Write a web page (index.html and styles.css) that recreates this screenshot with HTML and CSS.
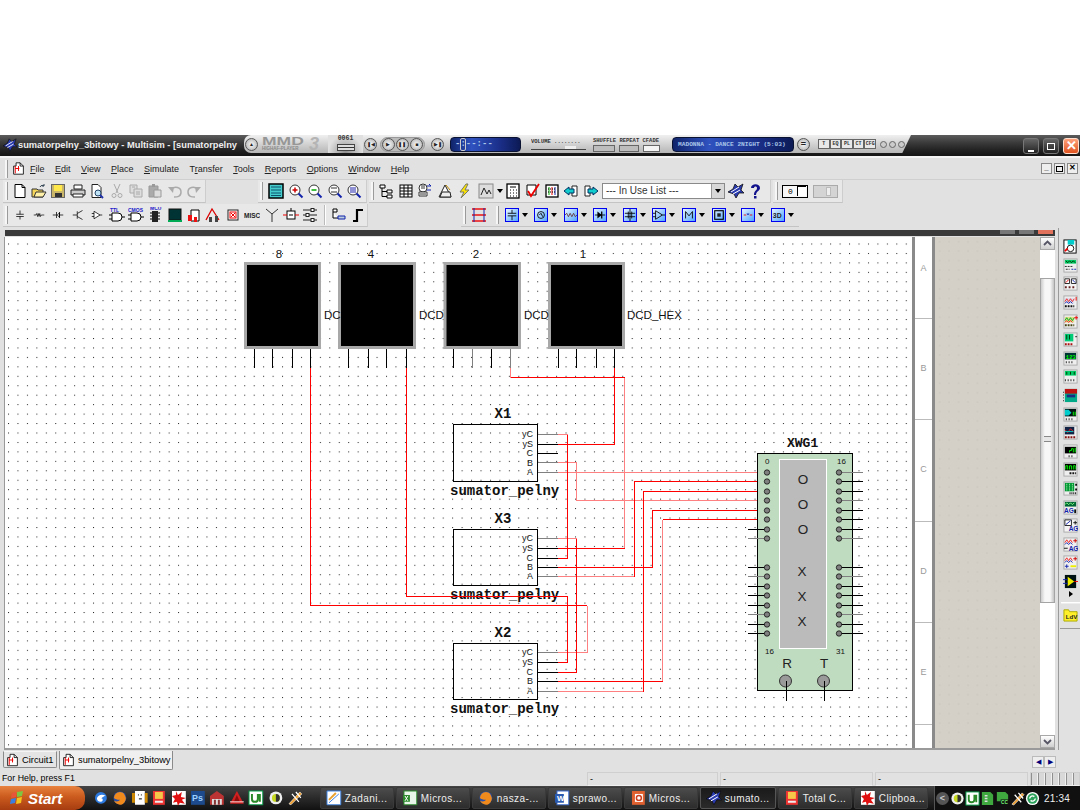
FILE: index.html
```html
<!DOCTYPE html>
<html lang="en">
<head>
<meta charset="utf-8">
<title>Multisim</title>
<link rel="stylesheet" href="styles.css">
</head>
<body>
<svg class="sprite" xmlns="http://www.w3.org/2000/svg">
  <symbol id="msim" viewBox="0 0 16 16"><path d="M0 9 5 6 7 1l3 3 5-3-2 6 3 3-5 0-3 5-2-4z" fill="#2a3bb0" stroke="#111" stroke-width=".8"/><path d="M3 9l8-5M5 11l7-4" stroke="#fff" stroke-width="1"/></symbol>
  <symbol id="cdoc" viewBox="0 0 16 16"><path d="M5 1h5l4 4v10H2V5h3z" fill="#fff" stroke="#000"/><path d="M10 1v4h4" fill="none" stroke="#000"/><path d="M4 5v9M4 8h5M8 5v6" fill="none" stroke="#e00" stroke-width="1.2"/></symbol>
  <symbol id="new" viewBox="0 0 16 16"><path d="M3 1.500h7l3 3v10H3z" fill="#fff" stroke="#000"/><path d="M10 1.500v3h3" fill="none" stroke="#000"/></symbol>
  <symbol id="open" viewBox="0 0 16 16"><path d="M1 6h5l1 1h5v7H1z" fill="#f5d65a" stroke="#333"/><path d="M3 14l2-5h10l-3 5z" fill="#fff2a8" stroke="#333"/><path d="M9 4c1-2 3-2 4-1m0 0v-2m0 2h-2" fill="none" stroke="#345"/></symbol>
  <symbol id="save" viewBox="0 0 16 16"><rect x="1.500" y="1.500" width="13" height="13" fill="#c9b66a" stroke="#666"/><rect x="4" y="2" width="8" height="6" fill="#ffe94a"/><rect x="5" y="10" width="7" height="4" fill="#333"/></symbol>
  <symbol id="print" viewBox="0 0 16 16"><path d="M4 2h8v4H4z" fill="#fff" stroke="#222"/><path d="M1 7h14v5H1z" fill="#ccc" stroke="#222"/><path d="M3 11h10v3H3z" fill="#fff" stroke="#222"/></symbol>
  <symbol id="prev" viewBox="0 0 16 16"><path d="M3 1.500h6l3 3v10H3z" fill="#fff" stroke="#222"/><circle cx="9" cy="10" r="3" fill="#bfe3f5" stroke="#246"/><path d="M11 12l3 3" stroke="#23a" stroke-width="2"/></symbol>
  <symbol id="cut" viewBox="0 0 16 16"><path d="M5 1l4 9M11 1 7 10" stroke="#aaa" fill="none"/><circle cx="5" cy="12.500" r="2" fill="none" stroke="#aaa"/><circle cx="11" cy="12.500" r="2" fill="none" stroke="#aaa"/></symbol>
  <symbol id="copy" viewBox="0 0 16 16"><path d="M2 2h7v8H2z" fill="#ddd" stroke="#aaa"/><path d="M6 6h8v8H6z" fill="#ddd" stroke="#aaa"/><path d="M8 9h4M8 11h4M4 4h3" stroke="#aaa"/></symbol>
  <symbol id="paste" viewBox="0 0 16 16"><path d="M2 3h9v11H2z" fill="#aaa" stroke="#999"/><path d="M7 7h7v7H7z" fill="#ddd" stroke="#999"/><path d="M5 1h3v3H5z" fill="#999"/></symbol>
  <symbol id="undo" viewBox="0 0 16 16"><path d="M4 6c4-3 10-2 10 3s-4 5-7 5" fill="none" stroke="#aaa" stroke-width="1.500"/><path d="M1 4h6l-1 6z" fill="#aaa"/></symbol>
  <symbol id="redo" viewBox="0 0 16 16"><path d="M12 6C8 3 2 4 2 9s4 5 7 5" fill="none" stroke="#aaa" stroke-width="1.500"/><path d="M15 4H9l1 6z" fill="#aaa"/></symbol>
  <symbol id="full" viewBox="0 0 16 16"><rect x="1" y="1" width="14" height="14" fill="#4cc" stroke="#000" stroke-width="1.500"/><path d="M3 4h10M3 7h10M3 10h10M3 12.500h10" stroke="#035" stroke-width=".8"/></symbol>
  <symbol id="zin" viewBox="0 0 16 16"><circle cx="7" cy="7" r="5" fill="#fff" stroke="#333"/><path d="M4.500 7h5M7 4.500v5" stroke="#c00" stroke-width="1.500"/><path d="M10.500 10.500l4 4" stroke="#12a" stroke-width="2"/></symbol>
  <symbol id="zout" viewBox="0 0 16 16"><circle cx="7" cy="7" r="5" fill="#fff" stroke="#333"/><path d="M4.500 7h5" stroke="#0a0" stroke-width="1.500"/><path d="M10.500 10.500l4 4" stroke="#12a" stroke-width="2"/></symbol>
  <symbol id="zarea" viewBox="0 0 16 16"><circle cx="7" cy="7" r="5" fill="#fff" stroke="#333"/><path d="M4 5h6M4 9h6" stroke="#333"/><path d="M10.500 10.500l4 4" stroke="#12a" stroke-width="2"/></symbol>
  <symbol id="zfit" viewBox="0 0 16 16"><circle cx="7" cy="7" r="5" fill="#fff" stroke="#333"/><path d="M5 4v6M7 4v6M9 4v6" stroke="#22a"/><path d="M10.500 10.500l4 4" stroke="#12a" stroke-width="2"/></symbol>
  <symbol id="hier" viewBox="0 0 16 16"><path d="M2 2h5v3H2zM9 7h5v3H9zM9 12h5v3H9z" fill="#fff" stroke="#000"/><path d="M4 5v8.500h5M4 8.500h5" fill="none" stroke="#000"/></symbol>
  <symbol id="grid" viewBox="0 0 16 16"><rect x="2" y="2" width="12" height="12" fill="#fff" stroke="#000"/><path d="M2 5h12M2 8h12M2 11h12M6 2v12M10 2v12" stroke="#000"/></symbol>
  <symbol id="db" viewBox="0 0 16 16"><circle cx="6" cy="5" r="4" fill="#fff" stroke="#333"/><path d="M2 9h8v4H2z" fill="#fff" stroke="#333"/><path d="M10 3h4M14 3l-2-2M10 7h4" stroke="#12a" fill="none"/><path d="M4 3h4M4 5h4M3 11h6" stroke="#333"/></symbol>
  <symbol id="pen" viewBox="0 0 16 16"><path d="M2 14 8 2l6 12z" fill="#fff" stroke="#222"/><path d="M5 9h8l1 5H3z" fill="#eee" stroke="#222"/><path d="M9 2l4 5" stroke="#b80"/></symbol>
  <symbol id="bolt" viewBox="0 0 16 16"><path d="M10 1 4 9h4l-3 6 8-8H9l3-6z" fill="#ffe600" stroke="#776"/></symbol>
  <symbol id="graph" viewBox="0 0 16 16"><rect x="1" y="1" width="14" height="14" fill="#ddd" stroke="#888"/><path d="M3 12 6 5l3 6 2-4 2 4" fill="none" stroke="#222"/></symbol>
  <symbol id="calc" viewBox="0 0 16 16"><rect x="2" y="1" width="12" height="14" fill="#fff" stroke="#000" stroke-width="1.300"/><path d="M5 4h6M5 7h1M8 7h1M11 7h1M5 10h1M8 10h1M11 10h1M5 13h1M8 13h1M11 13h1" stroke="#000"/></symbol>
  <symbol id="calc2" viewBox="0 0 16 16"><rect x="2" y="2" width="12" height="12" fill="#fff" stroke="#000" stroke-width="1.300"/><path d="M5 4v8" stroke="#0a0"/><path d="M8 4v8" stroke="#e00"/><path d="M11 4v8" stroke="#12a"/><path d="M4 6h8M4 9h8" stroke="#000" stroke-dasharray="1 1"/></symbol>
  <symbol id="check" viewBox="0 0 16 16"><path d="M2 2h9v10H2z" fill="#fff" stroke="#000"/><path d="M3 8l3 5 8-12" fill="none" stroke="#e00" stroke-width="1.800"/></symbol>
  <symbol id="back" viewBox="0 0 16 16"><path d="M9 3h5v10H9z" fill="#fff" stroke="#222"/><path d="M1 8l5-4v2h5v4H6v2z" fill="#1cc" stroke="#036"/></symbol>
  <symbol id="fwd" viewBox="0 0 16 16"><path d="M2 3h5v10H2z" fill="#fff" stroke="#222"/><path d="M15 8l-5-4v2H5v4h5v2z" fill="#1cc" stroke="#036"/></symbol>
  <symbol id="help" viewBox="0 0 16 16"><path d="M4 5c0-5 9-5 9 0 0 3-4 3-4 7H7c0-5 3-4 3-7 0-2-3-2-3 0z" fill="#12128c"/><rect x="7" y="13" width="2.500" height="2.500" fill="#12128c"/></symbol>
  <symbol id="s1" viewBox="0 0 16 16"><path d="M8 2v5M3 7h10M3 10h10M8 10v4" stroke="#000" fill="none"/></symbol>
  <symbol id="s2" viewBox="0 0 16 16"><path d="M1 8h3l1-2 1 4 1-4 1 4 1-4 1 4 1-2h4" stroke="#000" fill="none" stroke-width=".9"/></symbol>
  <symbol id="s3" viewBox="0 0 16 16"><path d="M1 8h5M10 8h5M6 4v8M10 4v8M7 8l3-3v6z" stroke="#000" fill="none"/></symbol>
  <symbol id="s4" viewBox="0 0 16 16"><path d="M1 8h6M7 3v10M7 6l7-4M7 10l7 4" stroke="#000" fill="none"/></symbol>
  <symbol id="s5" viewBox="0 0 16 16"><path d="M4 3v10l8-5zM1 6h3M1 10h3M12 8h3" stroke="#000" fill="#fff"/></symbol>
  <symbol id="s6" viewBox="0 0 16 16"><path d="M3 6h6a4 4 0 0 1 0 8H3zM13 10h3M0 8h3M0 12h3" stroke="#000" fill="#fff"/><text class="ttl-a" x="1" y="5">TTL</text></symbol>
  <symbol id="s7" viewBox="0 0 16 16"><path d="M3 6h6a4 4 0 0 1 0 8H3zM13 10h3M0 8h3M0 12h3" stroke="#000" fill="#fff"/><text class="ttl-a" x="0" y="5">CMOS</text></symbol>
  <symbol id="s8" viewBox="0 0 16 16"><rect x="5" y="4" width="6" height="11" fill="#222"/><path d="M3 6h2M3 9h2M3 12h2M11 6h2M11 9h2M11 12h2" stroke="#000"/><text class="ttl-a" x="3" y="3">MCU</text></symbol>
  <symbol id="s9" viewBox="0 0 16 16"><rect x="2" y="2" width="12" height="11" fill="#033" stroke="#111"/><path d="M1 14h14" stroke="#0a5" stroke-width="2"/></symbol>
  <symbol id="s10" viewBox="0 0 16 16"><path d="M5 3h8v11H5z" fill="#fff" stroke="#000"/><path d="M2 8h4v6H2zM8 10h3v5H8z" fill="#e11"/></symbol>
  <symbol id="s11" viewBox="0 0 16 16"><path d="M1 13 7 2l7 11" fill="none" stroke="#d00" stroke-width="1.300"/><path d="M4 10h3v5H4zM10 9h3v6h-3z" fill="#444"/></symbol>
  <symbol id="s12" viewBox="0 0 16 16"><rect x="3" y="3" width="10" height="10" fill="#fff" stroke="#222"/><rect x="5" y="5" width="6" height="6" fill="none" stroke="#e00"/><path d="M6 6l4 4M10 6l-4 4" stroke="#e00"/></symbol>
  <symbol id="s13" viewBox="0 0 16 16"><text class="misc" x="0" y="11">MISC</text></symbol>
  <symbol id="s14" viewBox="0 0 16 16"><path d="M2 2l6 5 6-5M8 7v8" stroke="#333" fill="none"/></symbol>
  <symbol id="s15" viewBox="0 0 16 16"><rect x="4" y="4" width="8" height="8" fill="#fff" stroke="#000"/><path d="M0 8h4M12 8h4" stroke="#e00"/><path d="M8 1v3" stroke="#000"/><path d="M6 8h4" stroke="#000"/></symbol>
  <symbol id="s16" viewBox="0 0 16 16"><path d="M1 3h14M1 8h14M1 13h14" stroke="#222"/><rect x="9" y="1.500" width="3" height="3" fill="#fff" stroke="#222"/><rect x="4" y="6.500" width="3" height="3" fill="#fff" stroke="#222"/><rect x="9" y="11.500" width="3" height="3" fill="#fff" stroke="#222"/></symbol>
  <symbol id="s17" viewBox="0 0 16 16"><path d="M2 2h4v3H2zM2 5v6h5" fill="#fff" stroke="#000"/><path d="M7 9h7v3H7z" fill="#bcd" stroke="#12a"/></symbol>
  <symbol id="s18" viewBox="0 0 16 16"><path d="M3 14h4V3h6" fill="none" stroke="#000" stroke-width="2.200"/></symbol>
  <symbol id="bus" viewBox="0 0 16 16"><path d="M1 2h14M1 8h14M1 14h14" stroke="#e11" stroke-width="1.300"/><path d="M3 1v14M13 1v14" stroke="#12a"/></symbol>
  <symbol id="b1" viewBox="0 0 14 14"><path d="M7 1v4M2 5h10M2 8h10M7 8v5" stroke="#000" fill="none"/></symbol>
  <symbol id="b2" viewBox="0 0 14 14"><circle cx="7" cy="7" r="4" fill="none" stroke="#000"/><path d="M5 7l2-2 2 4" fill="none" stroke="#000"/></symbol>
  <symbol id="b3" viewBox="0 0 14 14"><path d="M0 7l2-2 2 4 2-4 2 4 2-4 2 4 2-2" fill="none" stroke="#633"/></symbol>
  <symbol id="b4" viewBox="0 0 14 14"><path d="M1 7h12" stroke="#000" fill="none"/><path d="M4 3v8l5-4z" fill="#000"/><path d="M9 3v8" stroke="#000" stroke-width="1.500"/></symbol>
  <symbol id="b5" viewBox="0 0 14 14"><path d="M7 0v14M1 5h12M1 9h12M5 3v8M9 3v8" stroke="#000" fill="none"/></symbol>
  <symbol id="b6" viewBox="0 0 14 14"><path d="M3 2v10l8-5zM0 5h3M0 9h3M11 7h3" stroke="#000" fill="none"/></symbol>
  <symbol id="b7" viewBox="0 0 14 14"><path d="M3 11V3l4 5 4-5v8" stroke="#000" fill="none"/></symbol>
  <symbol id="b8" viewBox="0 0 14 14"><rect x="2" y="2" width="10" height="10" fill="none" stroke="#000" stroke-width="1.300"/><rect x="5" y="5" width="4" height="4" fill="#222"/></symbol>
  <symbol id="b9" viewBox="0 0 14 14"><path d="M2 7h3M9 7h3" stroke="#e00"/><path d="M6 5l1 2 1-2" stroke="#12a" fill="none"/></symbol>
  <symbol id="b10" viewBox="0 0 14 14"><text class="b3d" x="1" y="10">3D</text></symbol>
  <symbol id="r0" viewBox="0 0 16 16"><rect x="1" y="1" width="13" height="14" fill="#fff" stroke="#000"/><rect x="5" y="1" width="7" height="5" fill="#0cc"/><circle cx="8" cy="10" r="3.500" fill="none" stroke="#111"/><path d="M2 13l3-3" stroke="#e00" stroke-width="2"/></symbol>
  <symbol id="r1" viewBox="0 0 16 16"><rect x="1" y="1" width="14" height="14" fill="#eee" stroke="#aaa"/><path d="M2 2h12v4H2z" fill="#0c6"/><path d="M3 3l2 2 2-2 2 2 2-2 2 2" stroke="#030" fill="none"/><path d="M2 9h8M3 12h4" stroke="#222" stroke-dasharray="2 1"/><path d="M9 12h5" stroke="#12a" stroke-dasharray="2 1"/></symbol>
  <symbol id="r2" viewBox="0 0 16 16"><rect x="1" y="1" width="14" height="14" fill="#f4f4f4" stroke="#aaa"/><path d="M2 3h5v5H2zM9 3h5v5H9z" fill="#fff" stroke="#222"/><path d="M3 7l3-3" stroke="#e00"/><path d="M10 4l3 3" stroke="#12a"/><path d="M2 12h10" stroke="#622" stroke-dasharray="2 2" stroke-width="2"/></symbol>
  <symbol id="r3" viewBox="0 0 16 16"><rect x="1" y="1" width="14" height="14" fill="#f0f0f0" stroke="#aaa"/><path d="M2 3h10v6H2z" fill="#dde"/><path d="M2 7l2-3 2 3 2-3 2 3 2-3" stroke="#e22" fill="none"/><path d="M2 9l2-2 2 2 2-2 2 2" stroke="#12a" fill="none"/><path d="M14 2v4" stroke="#e00"/><path d="M2 12h10" stroke="#111" stroke-dasharray="2 1" stroke-width="2"/></symbol>
  <symbol id="r4" viewBox="0 0 16 16"><rect x="1" y="1" width="14" height="14" fill="#f0f0f0" stroke="#aaa"/><path d="M2 3h10v6H2z" fill="#dd8"/><path d="M2 7l2-3 2 3 2-3 2 3 2-3" stroke="#0a2" fill="none"/><path d="M2 9l2-2 2 2 2-2 2 2" stroke="#e22" fill="none"/><path d="M14 2v4M12 4h4" stroke="#e00"/><path d="M2 12h10" stroke="#441" stroke-dasharray="2 1" stroke-width="2"/></symbol>
  <symbol id="r5" viewBox="0 0 16 16"><rect x="1" y="1" width="14" height="14" fill="#eee" stroke="#aaa"/><rect x="2" y="2" width="9" height="8" fill="#0c7"/><path d="M4 3v5M7 3v5" stroke="#030"/><path d="M2 13h9" stroke="#a11" stroke-dasharray="2 1" stroke-width="2"/><path d="M13 5h2" stroke="#222"/></symbol>
  <symbol id="r6" viewBox="0 0 16 16"><rect x="1" y="1" width="14" height="14" fill="#eee" stroke="#aaa"/><rect x="2" y="2" width="12" height="7" fill="#033"/><text class="rt" x="3" y="8">123</text><path d="M3 12h1M6 12h1M9 12h1" stroke="#222" stroke-width="2"/></symbol>
  <symbol id="r7" viewBox="0 0 16 16"><rect x="1" y="1" width="14" height="14" fill="#eee" stroke="#aaa"/><rect x="2" y="2" width="12" height="5" fill="#0c6"/><path d="M4 3v3M8 3v3M12 3v3" stroke="#030"/><path d="M2 12h12" stroke="#222" stroke-dasharray="1 2" stroke-width="2"/></symbol>
  <symbol id="r8" viewBox="0 0 16 16"><rect x="2" y="1" width="13" height="14" fill="#0a8"/><rect x="2" y="1" width="13" height="5" fill="#b11"/><rect x="4" y="7" width="9" height="3" fill="#1a2a80"/><path d="M0 4v10" stroke="#222" stroke-dasharray="1 2" stroke-width="2"/></symbol>
  <symbol id="r9" viewBox="0 0 16 16"><rect x="1" y="1" width="14" height="14" fill="#eee" stroke="#aaa"/><rect x="2" y="2" width="12" height="8" fill="#011"/><path d="M2 3h4l3 3-3 3H2z" fill="#0cc"/><path d="M11 5v4M13 5v4" stroke="#0f0"/><path d="M3 13h8" stroke="#222" stroke-dasharray="1 2" stroke-width="2"/></symbol>
  <symbol id="r10" viewBox="0 0 16 16"><rect x="1" y="1" width="14" height="14" fill="#eee" stroke="#aaa"/><rect x="2" y="2" width="10" height="8" fill="#124"/><path d="M2 5l3 3 3-4 3 3" stroke="#e22" fill="none"/><path d="M2 7h9" stroke="#1cc"/><path d="M2 13h12" stroke="#811" stroke-dasharray="2 1" stroke-width="2"/></symbol>
  <symbol id="r11" viewBox="0 0 16 16"><rect x="1" y="1" width="14" height="14" fill="#eee" stroke="#aaa"/><rect x="2" y="3" width="12" height="7" fill="#000"/><path d="M7 9V7h2V5h2v4M13 4v5" stroke="#0f0" fill="none"/><path d="M6 13h6" stroke="#222" stroke-dasharray="1 2" stroke-width="2"/></symbol>
  <symbol id="r12" viewBox="0 0 16 16"><rect x="1" y="1" width="14" height="14" fill="#eee" stroke="#aaa"/><rect x="2" y="2" width="12" height="7" fill="#000"/><path d="M3 8V4h2v4M7 8V4h2v4M11 8V4h2v4" stroke="#0f0" fill="none"/><path d="M7 12h7" stroke="#111" stroke-dasharray="2 1" stroke-width="2"/></symbol>
  <symbol id="r13" viewBox="0 0 16 16"><rect x="1" y="1" width="14" height="14" fill="#eee" stroke="#aaa"/><rect x="2" y="2" width="10" height="9" fill="#093"/><path d="M4 3v7M7 3v7M10 3v7" stroke="#cfc" stroke-dasharray="1 1"/><path d="M14 3v2M14 8v2" stroke="#111" stroke-width="2"/><path d="M7 13h7" stroke="#111" stroke-dasharray="1 1" stroke-width="2"/></symbol>
  <symbol id="r14" viewBox="0 0 16 16"><rect x="1" y="1" width="14" height="14" fill="#eee" stroke="#aaa"/><rect x="2" y="2" width="12" height="5" fill="#063"/><path d="M2 5l2-2 2 2 2-2 2 2 2-2" stroke="#8f8" fill="none"/><text class="ag" x="1" y="14">AG</text><path d="M13 10v4" stroke="#111" stroke-width="2"/></symbol>
  <symbol id="r15" viewBox="0 0 16 16"><rect x="1" y="1" width="14" height="14" fill="#f4f4f4" stroke="#aaa"/><path d="M2 2h7v6H2z" fill="#fff" stroke="#222"/><path d="M3 7l5-4" stroke="#12a"/><path d="M11 5h4M13 3v4" stroke="#111"/><text class="ag" x="6" y="14">AG</text></symbol>
  <symbol id="r16" viewBox="0 0 16 16"><rect x="1" y="1" width="14" height="14" fill="#f0f0f0" stroke="#aaa"/><path d="M2 6l2-3 2 3 2-3 2 3" stroke="#e22" fill="none"/><path d="M2 8l2-2 2 2 2-2 2 2" stroke="#12a" fill="none"/><path d="M13 2v4M11 4h4" stroke="#c00"/><text class="ag" x="6" y="15">AG</text><path d="M1 12h4" stroke="#111"/></symbol>
  <symbol id="r17" viewBox="0 0 16 16"><rect x="1" y="1" width="14" height="14" fill="#f0f0f0" stroke="#aaa"/><path d="M2 6l2-3 2 3 2-3 2 3" stroke="#e22" fill="none"/><path d="M2 8l2-2 2 2 2-2 2 2" stroke="#12a" fill="none"/><path d="M13 2v4M11 4h4" stroke="#c00"/><path d="M8 12h6" stroke="#ee0" stroke-width="2"/><path d="M2 12h4M4 10v4" stroke="#12a"/></symbol>
  <symbol id="r18" viewBox="0 0 16 16"><rect x="2" y="1" width="12" height="14" fill="#011"/><path d="M5 3v10l7-5z" fill="#ee0"/><path d="M0 6h5M0 10h5" stroke="#12a"/><path d="M12 8h4" stroke="#e00"/></symbol>
  <symbol id="r19" viewBox="0 0 16 16"><path d="M1 3h5l1 2h8v10H1z" fill="#fff02a" stroke="#aa0"/><text class="ldv" x="3" y="13">LdV</text></symbol>
  <symbol id="chev-up" viewBox="0 0 13 11"><path d="M3 7l3.500-3.500L10 7" fill="none" stroke="#556" stroke-width="1.800"/></symbol>
  <symbol id="chev-down" viewBox="0 0 13 11"><path d="M3 4l3.500 3.500L10 4" fill="none" stroke="#556" stroke-width="1.800"/></symbol>
  <symbol id="winflag" viewBox="0 0 16 16"><path d="M3 3 7 2v5l-5 1z" fill="#e8563a"/><path d="M8 2l6-1-1 5-5 1z" fill="#7ec540"/><path d="M2 9l5-1-1 5-5 1z" fill="#3a7fe0"/><path d="M8 8l5-1-1 6-5 1z" fill="#f5c21b"/></symbol>
  <symbol id="q1" viewBox="0 0 16 16"><circle cx="8" cy="8" r="6" fill="#2d7be0"/><path d="M4 8c2-4 6-4 9-2-3 0-3 2-5 2 2 0 3 3 0 4-3 0-4-2-4-4z" fill="#fff"/></symbol>
  <symbol id="q2" viewBox="0 0 16 16"><circle cx="8" cy="8" r="6.500" fill="#2a4fa8"/><path d="M2 8a6 6 0 0 1 6-6c4 0 5 3 6 6 0 4-3 7-6 7-2 0-5-2-6-4 2 1 5 1 6-1-3 0-5-1-6-2z" fill="#f08a1d"/></symbol>
  <symbol id="q3" viewBox="0 0 16 16"><path d="M3 1h10v14H3z" fill="#fff"/><path d="M0 3h3v10H0zM13 3h3v10h-3z" fill="#c80"/><path d="M6 5h1M9 5h1M7 9h3" stroke="#000"/></symbol>
  <symbol id="q4" viewBox="0 0 16 16"><rect x="2" y="1" width="12" height="14" fill="#e33"/><rect x="4" y="2" width="8" height="7" fill="#f5c84a"/><path d="M4 12h8" stroke="#eee" stroke-width="2"/></symbol>
  <symbol id="q5" viewBox="0 0 16 16"><rect x="1" y="1" width="14" height="14" fill="#fff"/><path d="M5 1l2 4 4-3-1 5 5 1-4 2 3 4-5-1-2 3-1-4-4 1 2-4-3-3 4-1z" fill="#e01010"/></symbol>
  <symbol id="q6" viewBox="0 0 16 16"><rect x="1" y="1" width="14" height="14" fill="#1c4a8c"/><text class="ps" x="2" y="11">Ps</text></symbol>
  <symbol id="q7" viewBox="0 0 16 16"><path d="M1 6 8 1l7 5v9H1z" fill="#b33"/><path d="M3 9h10v6H3z" fill="#ddd"/><path d="M5 10h2v5H5zM9 10h2v5H9z" fill="#833"/></symbol>
  <symbol id="q8" viewBox="0 0 16 16"><path d="M8 1l7 13H1z" fill="#d02020"/><path d="M8 5l3 7H5z" fill="#8a0d0d"/><path d="M1 12h14" stroke="#fdd"/></symbol>
  <symbol id="q9" viewBox="0 0 16 16"><rect x="1" y="1" width="14" height="14" fill="#fff" stroke="#094"/><path d="M4 4v5a3 3 0 0 0 6 0V4M12 4v8" stroke="#2a8a2a" stroke-width="2" fill="none"/></symbol>
  <symbol id="q10" viewBox="0 0 16 16"><circle cx="8" cy="8" r="6.500" fill="#eee"/><circle cx="8" cy="8" r="4" fill="#c6d820"/><path d="M8 4a4 4 0 0 1 0 8z" fill="#333"/></symbol>
  <symbol id="q11" viewBox="0 0 16 16"><path d="M2 14 13 2l2 2L4 15z" fill="#f0a030" stroke="#fff" stroke-width=".6"/><path d="M5 4l7 8M9 2l5 6" stroke="#fff" stroke-width="1.300"/></symbol>
  <symbol id="t1" viewBox="0 0 16 16"><rect x="1" y="1" width="14" height="14" fill="#fff"/><path d="M3 13 13 4M1 1h14v14H1z" stroke="#3a7fe0" fill="none"/><path d="M3 10 10 3" stroke="#e8a030" stroke-width="2"/></symbol>
  <symbol id="t2" viewBox="0 0 16 16"><rect x="2" y="1" width="13" height="14" fill="#e8f5e8" stroke="#2a8a2a"/><path d="M1 5h7v7H1z" fill="#2a8a2a"/><path d="M3 6l3 5M6 6l-3 5" stroke="#fff"/></symbol>
  <symbol id="t3" viewBox="0 0 16 16"><rect x="3" y="1" width="12" height="14" fill="#fff" stroke="#36c"/><path d="M1 4h9v9H1z" fill="#2a5ab0"/><text class="w" x="3" y="11">W</text></symbol>
  <symbol id="t4" viewBox="0 0 16 16"><rect x="2" y="1" width="13" height="14" fill="#e06030"/><rect x="5" y="4" width="8" height="8" fill="#fff"/><circle cx="9" cy="8" r="2.500" fill="none" stroke="#d04020" stroke-width="1.500"/></symbol>
  <symbol id="tr1" viewBox="0 0 16 16"><path d="M2 1h9l3 3v11H2z" fill="#3fa83f"/><path d="M5 5h3M5 8h3M5 11h3" stroke="#ddd" stroke-width="1.500"/></symbol>
  <symbol id="tr2" viewBox="0 0 16 16"><path d="M2 1h9l3 3v7H2z" fill="#3fa83f"/><rect x="6" y="9" width="9" height="6" fill="#111"/><text class="cc" x="6.500" y="14">CC</text></symbol>
  <symbol id="tr3" viewBox="0 0 16 16"><circle cx="8" cy="8" r="7" fill="#fff"/><circle cx="8" cy="8" r="5.500" fill="#2aa05a"/><path d="M5 8a3 3 0 0 1 5-2m1 2a3 3 0 0 1-5 2" stroke="#fff" stroke-width="1.500" fill="none"/></symbol>
</svg>

<div class="page">
  <div class="blank"></div>

  <header class="titlebar">
    <svg class="title-icon"><use href="#msim"/></svg>
    <span class="title-text">sumatorpelny_3bitowy - Multisim - [sumatorpelny</span>
    <div class="player">
      <span class="orb eject">&#9650;</span>
      <div class="logo">
        <div class="logo-main"><span class="logo-big">MMD</span><span class="logo-sub">HIGHAF-PLAYER</span></div>
        <span class="logo-three">3</span>
      </div>
      <div class="counter"><span>0061</span><i class="counter-btn"></i></div>
      <span class="orb prev">&#10074;&#9664;</span>
      <div class="pill"><span class="orb">&#9654;</span><span class="orb">&#10074;&#10074;</span><span class="orb">&#9632;</span></div>
      <span class="orb next">&#9654;&#10074;</span>
      <div class="lcd lcd-time"><span>-:--:--</span><i class="knob"></i></div>
      <div class="volume"><span>VOLUME ........</span><i class="slider"></i></div>
      <div class="modes">
        <span class="modes-text">SHUFFLE REPEAT CFADE</span>
        <div class="modes-btns"><i class="mb1"></i><i class="mb2"></i><i class="mb3"></i></div>
      </div>
      <div class="lcd lcd-song"><span>MADONNA - DANCE 2NIGHT (5:03)</span></div>
      <span class="orb menu-orb">=</span>
      <div class="minis"><span>T</span><span>EQ</span><span>PL</span><span>CT</span><span>CFG</span></div>
      <div class="dots"><i></i><i></i><i></i></div>
    </div>
    <div class="win-btns">
      <button class="wb wb-min"><span class="g-min"></span></button>
      <button class="wb wb-max"><span class="g-max"></span></button>
      <button class="wb wb-close">&#10005;</button>
    </div>
  </header>

  <nav class="menubar">
    <i class="grip"></i>
    <svg class="menu-icon"><use href="#cdoc"/></svg>
    <ul class="menu">
      <li><u>F</u>ile</li><li><u>E</u>dit</li><li><u>V</u>iew</li><li><u>P</u>lace</li><li><u>S</u>imulate</li><li>T<u>r</u>ansfer</li><li><u>T</u>ools</li><li><u>R</u>eports</li><li><u>O</u>ptions</li><li><u>W</u>indow</li><li><u>H</u>elp</li>
    </ul>
    <div class="mdi">
      <span class="mdi-b">_</span>
      <span class="mdi-b"><span class="g-rest"></span></span>
      <span class="mdi-b">&#10005;</span>
    </div>
  </nav>

  <div class="toolbar">
    <div class="grp t1g1"><i class="grip"></i>
      <svg class="ic"><use href="#new"/></svg><svg class="ic"><use href="#open"/></svg><svg class="ic"><use href="#save"/></svg><svg class="ic"><use href="#print"/></svg><svg class="ic"><use href="#prev"/></svg><svg class="ic"><use href="#cut"/></svg><svg class="ic"><use href="#copy"/></svg><svg class="ic"><use href="#paste"/></svg><svg class="ic"><use href="#undo"/></svg><svg class="ic"><use href="#redo"/></svg>
    </div>
    <div class="grp t1g2"><i class="grip"></i>
      <svg class="ic"><use href="#full"/></svg><svg class="ic"><use href="#zin"/></svg><svg class="ic"><use href="#zout"/></svg><svg class="ic"><use href="#zarea"/></svg><svg class="ic"><use href="#zfit"/></svg>
    </div>
    <div class="grp t1g3"><i class="grip"></i>
      <svg class="ic"><use href="#hier"/></svg><svg class="ic"><use href="#grid"/></svg><svg class="ic"><use href="#db"/></svg><svg class="ic"><use href="#pen"/></svg><svg class="ic"><use href="#bolt"/></svg><svg class="ic ic-graph"><use href="#graph"/></svg><i class="drop"></i><svg class="ic"><use href="#calc"/></svg><svg class="ic"><use href="#check"/></svg><svg class="ic"><use href="#calc2"/></svg><svg class="ic"><use href="#back"/></svg><svg class="ic"><use href="#fwd"/></svg>
      <div class="combo"><span>--- In Use List ---</span><i class="combo-btn"></i></div>
      <svg class="ic"><use href="#msim"/></svg><svg class="ic"><use href="#help"/></svg>
    </div>
    <div class="grp t1g4"><i class="grip"></i>
      <div class="sw sw-on"><span>0</span><i></i></div>
      <div class="sw sw-off"><i></i></div>
    </div>
  </div>

  <div class="toolbar">
    <div class="grp t2g1"><i class="grip"></i>
      <svg class="ic ic-sm"><use href="#s1"/></svg><svg class="ic ic-sm"><use href="#s2"/></svg><svg class="ic ic-sm"><use href="#s3"/></svg><svg class="ic ic-sm"><use href="#s4"/></svg><svg class="ic ic-sm"><use href="#s5"/></svg><svg class="ic"><use href="#s6"/></svg><svg class="ic"><use href="#s7"/></svg><svg class="ic"><use href="#s8"/></svg><svg class="ic"><use href="#s9"/></svg><svg class="ic"><use href="#s10"/></svg><svg class="ic"><use href="#s11"/></svg><svg class="ic"><use href="#s12"/></svg><svg class="ic"><use href="#s13"/></svg><svg class="ic"><use href="#s14"/></svg><svg class="ic"><use href="#s15"/></svg><svg class="ic"><use href="#s16"/></svg>
      <i class="vsep"></i>
      <svg class="ic"><use href="#s17"/></svg><svg class="ic"><use href="#s18"/></svg>
    </div>
    <div class="grp t2g2"><i class="grip"></i><svg class="ic"><use href="#bus"/></svg></div>
    <div class="grp t2g3"><i class="grip"></i>
      <div class="bcell"><svg class="bi"><use href="#b1"/></svg><i class="drop"></i></div>
      <div class="bcell"><svg class="bi"><use href="#b2"/></svg><i class="drop"></i></div>
      <div class="bcell"><svg class="bi"><use href="#b3"/></svg><i class="drop"></i></div>
      <div class="bcell"><svg class="bi"><use href="#b4"/></svg><i class="drop"></i></div>
      <div class="bcell"><svg class="bi"><use href="#b5"/></svg><i class="drop"></i></div>
      <div class="bcell"><svg class="bi"><use href="#b6"/></svg><i class="drop"></i></div>
      <div class="bcell"><svg class="bi"><use href="#b7"/></svg><i class="drop"></i></div>
      <div class="bcell"><svg class="bi"><use href="#b8"/></svg><i class="drop"></i></div>
      <div class="bcell"><svg class="bi"><use href="#b9"/></svg><i class="drop"></i></div>
      <div class="bcell"><svg class="bi"><use href="#b10"/></svg><i class="drop"></i></div>
    </div>
  </div>

  <main class="workspace">
    <div class="doc">
      <div class="doc-strip"><i></i><i></i><i class="red"></i></div>
      <div class="doc-body">
        <svg class="sheet" width="907" height="511" viewBox="5 237 907 511" xmlns="http://www.w3.org/2000/svg">
          <defs>
            <pattern id="dots" patternUnits="userSpaceOnUse" x="8" y="243.500" width="9.450" height="9.450"><rect width="1" height="1" fill="#222"/></pattern>
          </defs>
          <rect x="5" y="237" width="907" height="511" fill="#fff"/>
          <rect x="5" y="237" width="907" height="511" fill="url(#dots)"/>

          <g class="lcdbox">
            <rect x="245.500" y="263.500" width="74" height="84"/>
            <rect x="339.500" y="263.500" width="75" height="84"/>
            <rect x="445" y="263.500" width="74.500" height="84"/>
            <rect x="549.500" y="263.500" width="74" height="84"/>
          </g>
          <g class="t-lbl">
            <text x="279" y="258" text-anchor="middle">8</text>
            <text x="371" y="258" text-anchor="middle">4</text>
            <text x="476" y="258" text-anchor="middle">2</text>
            <text x="583" y="258" text-anchor="middle">1</text>
            <text x="324" y="319">DC</text>
            <text x="419" y="319">DCD</text>
            <text x="524" y="319">DCD</text>
            <text x="627" y="319">DCD_HEX</text>
          </g>

          <g class="comp">
            <rect x="453.500" y="424.500" width="84" height="57"/>
            <rect x="453.500" y="529.500" width="84" height="56"/>
            <rect x="453.500" y="643.500" width="84" height="56"/>
          </g>
          <g class="t-name">
            <text x="503" y="418" text-anchor="middle">X1</text>
            <text x="450" y="495">sumator_pelny</text>
            <text x="503" y="523" text-anchor="middle">X3</text>
            <text x="450" y="599">sumator_pelny</text>
            <text x="503" y="637" text-anchor="middle">X2</text>
            <text x="450" y="713">sumator_pelny</text>
            <text class="t-tight" x="787" y="447">XWG1</text>
          </g>
          <g class="t-pin">
            <text x="533" y="437">yC</text><text x="533" y="447">yS</text><text x="533" y="456">C</text><text x="533" y="466">B</text><text x="533" y="475">A</text>
            <text x="533" y="541">yC</text><text x="533" y="551">yS</text><text x="533" y="561">C</text><text x="533" y="570">B</text><text x="533" y="579">A</text>
            <text x="533" y="655">yC</text><text x="533" y="665">yS</text><text x="533" y="675">C</text><text x="533" y="684">B</text><text x="533" y="694">A</text>
          </g>

          <path class="w-black" d="M254.500 349v19M272.500 349v19M292.500 349v19M310.500 349v19M348.500 349v19M368.500 349v19M386.500 349v19M406.500 349v19M453.500 349v19M491.500 349v19M558.500 349v19M576.500 349v19M596.500 349v19M614.500 349v19"/>
          <path class="w-gray" d="M472.500 349v19M510.500 349v19"/>
          <path class="w-gray" d="M538 434.500h20M538 462.500h20M538 472.500h20M538 538.500h20M538 576.500h20M538 652.500h20M538 691.500h20"/>
          <path class="w-black" d="M538 444.500h20M538 453.500h20M538 548.500h20M538 558.500h20M538 567.500h20M538 662.500h20M538 672.500h20M538 681.500h20"/>

          <path class="w-pink" d="M510.500 368v9.500M624.500 377.500V548.500M558 434.500h9.500M558 462.500h18.500V500.500H764M558 472.500H764M558 538.500h18.500M558 576.500h76.500M587 605.500V652.500H558M662.500 519.500V681.500M643.500 691.500H558"/>
          <path class="w-red" d="M310.500 368V605.500H587M406.500 368V596.500H567.500V662.500H558M558 444.500H614.500V368M510.500 377.500H624.500M624.500 548.500H558M567.500 434.500V558.500H558M576.500 538.500V672.500H558M558 567.500H652.500V510.500H764M634.500 576.500V481.500H764M558 681.500H662.500M662.500 519.500H764M643.500 691.500V491.500H764"/>

          <rect class="inst" x="757.500" y="453.500" width="95" height="237"/>
          <rect class="inst-in" x="779.500" y="459.500" width="47" height="189"/>
          <path class="w-black" d="M748 529.500h19M748 567.500h19M748 586.500h19M748 595.500h19M748 605.500h19M748 624.500h19M748 633.500h19M839 481.500h24M839 491.500h24M839 510.500h24M839 519.500h24M839 529.500h24M839 567.500h24M839 586.500h24M839 595.500h24M839 605.500h24M839 624.500h24M839 633.500h24"/>
          <path class="w-gray" d="M748 538.500h19M748 576.500h19M748 614.500h19M839 472.500h24M839 500.500h24M839 538.500h24M839 576.500h24M839 614.500h24"/>
          <g class="ipin">
            <circle cx="767" cy="472.500" r="2.500"/><circle cx="767" cy="481.500" r="2.500"/><circle cx="767" cy="491.500" r="2.500"/><circle cx="767" cy="500.500" r="2.500"/><circle cx="767" cy="510.500" r="2.500"/><circle cx="767" cy="519.500" r="2.500"/><circle cx="767" cy="529.500" r="2.500"/><circle cx="767" cy="538.500" r="2.500"/>
            <circle cx="767" cy="567.500" r="2.500"/><circle cx="767" cy="576.500" r="2.500"/><circle cx="767" cy="586.500" r="2.500"/><circle cx="767" cy="595.500" r="2.500"/><circle cx="767" cy="605.500" r="2.500"/><circle cx="767" cy="614.500" r="2.500"/><circle cx="767" cy="624.500" r="2.500"/><circle cx="767" cy="633.500" r="2.500"/>
            <circle cx="839" cy="472.500" r="2.500"/><circle cx="839" cy="481.500" r="2.500"/><circle cx="839" cy="491.500" r="2.500"/><circle cx="839" cy="500.500" r="2.500"/><circle cx="839" cy="510.500" r="2.500"/><circle cx="839" cy="519.500" r="2.500"/><circle cx="839" cy="529.500" r="2.500"/><circle cx="839" cy="538.500" r="2.500"/>
            <circle cx="839" cy="567.500" r="2.500"/><circle cx="839" cy="576.500" r="2.500"/><circle cx="839" cy="586.500" r="2.500"/><circle cx="839" cy="595.500" r="2.500"/><circle cx="839" cy="605.500" r="2.500"/><circle cx="839" cy="614.500" r="2.500"/><circle cx="839" cy="624.500" r="2.500"/><circle cx="839" cy="633.500" r="2.500"/>
          </g>
          <g class="ipin-big"><circle cx="785.500" cy="681" r="6"/><circle cx="823.500" cy="681" r="6"/></g>
          <path class="w-black" d="M786.500 681v20M824.500 681v20"/>
          <g class="t-tiny">
            <text x="765" y="464">0</text><text x="837" y="464">16</text><text x="765" y="654">16</text><text x="836" y="654">31</text>
          </g>
          <g class="t-mark">
            <text x="803" y="484" text-anchor="middle">O</text><text x="803" y="509" text-anchor="middle">O</text><text x="803" y="534" text-anchor="middle">O</text>
            <text x="802" y="576" text-anchor="middle">X</text><text x="802" y="601" text-anchor="middle">X</text><text x="802" y="626" text-anchor="middle">X</text>
            <text x="787" y="668" text-anchor="middle">R</text><text x="824" y="668" text-anchor="middle">T</text>
          </g>
        </svg>
        <div class="ruler">
          <span>A</span><span>B</span><span>C</span><span>D</span><span>E</span>
        </div>
        <div class="outside"></div>
        <div class="vscroll">
          <span class="sb-btn"><svg class="sb-ic"><use href="#chev-up"/></svg></span>
          <div class="sb-track"><div class="sb-thumb"><i></i></div></div>
          <span class="sb-btn"><svg class="sb-ic"><use href="#chev-down"/></svg></span>
        </div>
      </div>
    </div>
    <aside class="instbar">
      <svg class="ri"><use href="#r0"/></svg><svg class="ri"><use href="#r1"/></svg><svg class="ri"><use href="#r2"/></svg><svg class="ri"><use href="#r3"/></svg><svg class="ri"><use href="#r4"/></svg><svg class="ri"><use href="#r5"/></svg><svg class="ri"><use href="#r6"/></svg><svg class="ri"><use href="#r7"/></svg><svg class="ri"><use href="#r8"/></svg><svg class="ri"><use href="#r9"/></svg><svg class="ri"><use href="#r10"/></svg><svg class="ri"><use href="#r11"/></svg><svg class="ri"><use href="#r12"/></svg><svg class="ri"><use href="#r13"/></svg><svg class="ri"><use href="#r14"/></svg><svg class="ri"><use href="#r15"/></svg><svg class="ri"><use href="#r16"/></svg><svg class="ri"><use href="#r17"/></svg><svg class="ri"><use href="#r18"/></svg>
      <i class="ri-more"></i>
      <i class="ri-sep"></i>
      <svg class="ri"><use href="#r19"/></svg>
      <i class="ri-end"></i>
    </aside>
  </main>

  <div class="tabs">
    <div class="tab tab-a"><svg class="tab-ic"><use href="#cdoc"/></svg><span>Circuit1</span></div>
    <div class="tab tab-b"><svg class="tab-ic"><use href="#cdoc"/></svg><span>sumatorpelny_3bitowy</span></div>
    <div class="tab-nav"><span>&#9664;</span><span>&#9654;</span></div>
  </div>

  <div class="status">
    <span class="status-msg">For Help, press F1</span>
    <span class="pane pane-a">-</span>
    <span class="pane pane-b">-</span>
    <span class="pane pane-c">-</span>
    <span class="pane pane-d"></span>
  </div>

  <footer class="taskbar">
    <div class="start"><svg class="flag"><use href="#winflag"/></svg><span>Start</span></div>
    <div class="quick">
      <svg class="q"><use href="#q1"/></svg><svg class="q"><use href="#q2"/></svg><svg class="q"><use href="#q3"/></svg><svg class="q"><use href="#q4"/></svg><svg class="q"><use href="#q5"/></svg><svg class="q"><use href="#q6"/></svg><svg class="q"><use href="#q7"/></svg><svg class="q"><use href="#q8"/></svg><svg class="q"><use href="#q9"/></svg><svg class="q"><use href="#q10"/></svg><svg class="q"><use href="#q11"/></svg>
    </div>
    <div class="tasks">
      <div class="task"><svg class="q"><use href="#t1"/></svg><span>Zadani...</span></div>
      <div class="task"><svg class="q"><use href="#t2"/></svg><span>Micros...</span></div>
      <div class="task"><svg class="q"><use href="#q2"/></svg><span>nasza-...</span></div>
      <div class="task"><svg class="q"><use href="#t3"/></svg><span>sprawo...</span></div>
      <div class="task"><svg class="q"><use href="#t4"/></svg><span>Micros...</span></div>
      <div class="task active"><svg class="q"><use href="#msim"/></svg><span>sumato...</span></div>
      <div class="task"><svg class="q"><use href="#q4"/></svg><span>Total C...</span></div>
      <div class="task"><svg class="q"><use href="#q5"/></svg><span>Clipboa...</span></div>
    </div>
    <div class="tray">
      <span class="chev">&lt;</span>
      <svg class="q"><use href="#q10"/></svg><svg class="q"><use href="#q9"/></svg><svg class="q"><use href="#tr1"/></svg><svg class="q"><use href="#tr2"/></svg><svg class="q"><use href="#q11"/></svg><svg class="q"><use href="#tr3"/></svg>
      <span class="clock">21:34</span>
    </div>
  </footer>
</div>
</body>
</html>
```

FILE: styles.css
```css
* { box-sizing: border-box; }
html, body { margin: 0; padding: 0; background: #fff; }
body { font-family: "Liberation Sans", Arial, sans-serif; color: #000; }
.sprite { display: none; }
i { display: block; font-style: normal; }

.page { width: 1080px; height: 810px; overflow: hidden; display: flex; flex-direction: column; background: #e1e1e1; }
.blank { height: 135px; background: #fff; flex: none; }

/* title bar */
.titlebar { height: 23px; flex: none; display: flex; background: linear-gradient(#5c5c5c, #3c3c3c 35%, #232323 70%, #161616 95%); border-bottom: 2px solid #f4f4f4; color: #fff; }
.title-icon { width: 14px; height: 14px; margin: 3px 0 0 3px; flex: none; }
.title-text { width: 226px; flex: none; margin-left: 1px; font-size: 9.300px; font-weight: bold; line-height: 20px; white-space: nowrap; overflow: hidden; color: #eee; }
.player { position: relative; width: 667px; height: 18px; flex: none; display: flex; align-items: center; background: linear-gradient(#f0f0f0, #d2d2d2 50%, #b6b6b6); color: #333; border-radius: 7px 0 0 7px; clip-path: polygon(0 0, 100% 0, 98.700% 100%, 0 100%); }
.orb { width: 13px; height: 13px; flex: none; border-radius: 50%; border: 1px solid #555; background: radial-gradient(#fafafa, #a9a9a9); font-size: 5px; line-height: 11px; text-align: center; color: #222; overflow: hidden; }
.eject { margin-left: 1px; }
.logo { width: 65px; margin-left: 4px; flex: none; display: flex; align-items: center; }
.logo-main { width: 44px; flex: none; }
.logo-big { display: block; width: 24px; font-size: 10px; font-weight: bold; line-height: 9px; color: #969696; transform: scaleX(1.750); transform-origin: left center; }
.logo-sub { display: block; font-size: 4.500px; font-weight: bold; line-height: 5px; color: #888; white-space: nowrap; }
.logo-three { font-size: 18px; line-height: 18px; font-style: italic; font-weight: bold; color: #b4b4b4; margin-left: 3px; }
.counter { width: 35px; height: 18px; margin-left: 1px; flex: none; text-align: center; font: bold 6.500px/8px "Liberation Mono", monospace; background: radial-gradient(ellipse at 50% 100%, #8f8f8f 0, #e0e0e0 70%); }
.counter-btn { width: 18px; height: 7px; margin: 1px auto 0; border: 1px solid #444; background: linear-gradient(#ddd 40%, #333 40%, #333 60%, #ddd 60%); }
.prev { margin-left: 1px; }
.pill { width: 45px; height: 15px; margin-left: 3px; flex: none; display: flex; justify-content: space-around; align-items: center; border-radius: 8px; background: #bbb; border: 1px solid #999; }
.next { margin-left: 6px; }
.lcd { flex: none; height: 15px; border-radius: 4px; background: linear-gradient(90deg, #10246a, #2f52c0 30%, #1b2f8a 70%, #0c1a55); border: 1px solid #0b1333; color: #a8c4e8; overflow: hidden; white-space: nowrap; font: bold 6.200px/13px "Liberation Mono", monospace; }
.lcd-time { width: 71px; margin-left: 6px; padding-left: 4px; position: relative; font-size: 9px; }
.knob { position: absolute; top: 0; left: 9px; width: 6px; height: 13px; border: 1px solid #ccc; border-radius: 2px; }
.volume { width: 55px; margin-left: 10px; flex: none; font: bold 5.500px/7px "Liberation Mono", monospace; white-space: nowrap; overflow: hidden; }
.slider { height: 4px; margin-top: 1px; border-bottom: 1px solid #444; background: linear-gradient(90deg, transparent 62%, #eee 62%, #eee 82%, transparent 82%); }
.modes { width: 67px; margin-left: 7px; flex: none; }
.modes-text { display: block; font: bold 5.500px/8px "Liberation Mono", monospace; white-space: nowrap; }
.modes-btns { display: flex; gap: 4px; }
.modes-btns i { height: 7px; background: #bdbdbd; border: 1px solid #666; }
.mb1 { width: 22px; } .mb2 { width: 20px; } .modes-btns .mb3 { width: 17px; background: #f4f4f4; }
.lcd-song { width: 122px; margin-left: 12px; padding-left: 5px; }
.menu-orb { margin-left: 3px; font-size: 9px; font-weight: bold; line-height: 10px; }
.minis { display: flex; margin-left: 8px; flex: none; }
.minis span { width: 11.600px; height: 10px; border: 1px solid #666; background: #e8e8e8; font: bold 5px/8px "Liberation Mono", monospace; text-align: center; }
.dots { display: flex; gap: 2px; margin-left: 4px; flex: none; }
.dots i { width: 7px; height: 7px; border-radius: 50%; border: 1px solid #666; background: #ccc; }
.win-btns { margin-left: auto; display: flex; gap: 4px; padding: 3px 1px 0 0; }
.wb { width: 16px; height: 16px; padding: 0; border: 1px solid #777; border-radius: 3px; background: linear-gradient(#666, #222); color: #fff; }
.wb-close { background: linear-gradient(#ffa27c, #e0531f); border-color: #ffe0d0; font-size: 13px; line-height: 12px; font-weight: bold; overflow: hidden; }
.g-min { display: block; width: 6px; height: 2px; background: #fff; margin: 9px 0 0 4px; }
.g-max { display: block; width: 8px; height: 7px; border: 1px solid #fff; margin: 1px 0 0 3px; }

/* menu */
.menubar { height: 22px; flex: none; display: flex; align-items: center; padding-left: 5px; border-bottom: 1px solid #cfcfcf; }
.grip { width: 3px; height: 18px; flex: none; background: #f6f6f6; border-right: 1px solid #9a9a9a; }
.menu-icon { width: 13px; height: 13px; margin-left: 4px; flex: none; }
.menu { list-style: none; display: flex; gap: 10.500px; margin: 0 0 0 5px; padding: 0; font-size: 9px; color: #222; }
.mdi { margin-left: auto; display: flex; gap: 2px; padding-right: 2px; }
.mdi-b { width: 11px; height: 11px; background: #eee; border: 1px solid #888; font-size: 8px; font-weight: bold; line-height: 8px; text-align: center; overflow: hidden; }
.g-rest { display: block; width: 7px; height: 6px; border: 1px solid #000; margin: 2px 0 0 1px; }

/* toolbars */
.toolbar { height: 24px; flex: none; display: flex; align-items: flex-start; }
.grp { height: 23px; flex: none; display: flex; align-items: center; padding-left: 2px; border-bottom: 1px solid #c4c4c4; }
.grp .grip { margin-right: 2px; }
.ic { width: 16px; height: 16px; flex: none; margin: 0 1.700px; }
.ic-sm { width: 12px; height: 12px; margin: 0 3.700px; }
.ic-graph { margin-left: 4.200px; }
.t1g1 { width: 203px; margin-left: 3px; background: #e8e8e8; border-right: 1px solid #cdcdcd; }
.t1g2 { width: 109px; margin-left: 52px; background: #e8e8e8; border-right: 1px solid #cdcdcd; }
.t1g2 .grip { margin-right: 3.800px; }
.t1g3 { width: 402px; margin-left: 2px; background: #e8e8e8; border-right: 1px solid #cdcdcd; }
.t1g3 .grip { margin-right: 2.800px; }
.t1g4 { width: 70px; margin-left: 2px; background: #e8e8e8; border-right: 1px solid #cdcdcd; }
.t1g4 .grip { margin-right: 4px; }
.drop { width: 0; height: 0; flex: none; margin: 0 1px; border: 3px solid transparent; border-top: 4px solid #000; border-bottom: 0; }
.combo { width: 123px; height: 16px; flex: none; margin: 0 1.500px; display: flex; background: #fff; border: 1px solid #8a8a8a; font-size: 10px; line-height: 14px; padding-left: 3px; color: #333; }
.combo span { flex: 1; }
.combo-btn { width: 13px; background: #d8d8d8; border-left: 1px solid #999; position: relative; }
.combo-btn::after { content: ""; position: absolute; left: 3px; top: 5px; border: 3px solid transparent; border-top: 4px solid #000; border-bottom: 0; }
.sw { height: 13px; flex: none; display: flex; align-items: center; font: 8px "Liberation Mono", monospace; }
.sw-on { width: 26px; border: 1.500px solid #000; background: #f8f8f8; padding-left: 5px; }
.sw-on i { width: 9px; height: 10px; margin-left: 4px; border-left: 1px solid #000; border-top: 1px solid #000; background: #fff; }
.sw-off { width: 25px; margin-left: 5px; border: 1px solid #aaa; background: #d4d4d4; }
.sw-off i { width: 5px; height: 9px; margin-left: 12px; border: 1px solid #bbb; background: #eee; }
.t2g1 { width: 365px; margin-left: 3px; background: #e8e8e8; border-right: 1px solid #cdcdcd; }
.vsep { width: 2px; height: 20px; flex: none; margin: 0 3.500px; background: #bbb; border-right: 1px solid #fff; }
.t2g2 { width: 33px; margin-left: 93px; }
.t2g2 .grip { margin-right: 3px; }
.t2g3 { width: 305px; }
.t2g3 .grip { margin-right: 5.500px; }
.bcell { width: 29.600px; flex: none; display: flex; align-items: center; gap: 3px; }
.bcell .drop { margin: 0; }
.bi { width: 14px; height: 14px; flex: none; border: 1px solid #0000f0; background: linear-gradient(135deg, #e8f4ff, #4fa6ff); }

/* workspace */
.workspace { height: 522px; flex: none; display: flex; }
.doc { width: 1055px; flex: none; padding: 2px 0 0 5px; }
.doc-strip { height: 6px; margin-bottom: 1px; background: #3a3a3a; display: flex; justify-content: flex-end; gap: 4px; padding-right: 2px; }
.doc-strip i { width: 15px; height: 4px; background: #777; }
.doc-strip .red { background: #e2725b; }
.doc-body { height: 513px; display: flex; border-bottom: 2px solid #9a9a9a; border-left: 1px solid #999; margin-left: -1px; }
.sheet { display: block; width: 907px; height: 511px; flex: none; }
.ruler { width: 23px; height: 511px; flex: none; overflow: hidden; border-left: 3px solid #8a8a8a; border-right: 3px solid #8a8a8a; background: #fff; }
.ruler span { display: block; height: 101.400px; line-height: 99px; text-align: center; font-size: 9px; color: #9a9a9a; border-bottom: 1px solid #bbb; }
.ruler span:first-child { height: 82px; line-height: 62px; }
.outside { flex: 1; background-color: #d4d0c8; background-image: radial-gradient(#c2beb6 .6px, transparent .7px); background-size: 9.450px 9.450px; }
.vscroll { width: 15px; height: 511px; flex: none; display: flex; flex-direction: column; background: #fff; }
.sb-btn { height: 13px; flex: none; display: block; border: 1px solid #a8a8a8; background: linear-gradient(#fff, #cfcfcf); }
.sb-ic { display: block; width: 13px; height: 11px; }
.sb-track { flex: 1; padding-top: 28px; }
.sb-thumb { height: 325px; border: 1px solid #a4a4a4; background: linear-gradient(90deg, #ccc, #f7f7f7 30%, #f7f7f7 70%, #c4c4c4); padding-top: 157px; }
.sb-thumb i { width: 7px; height: 6px; margin: 0 auto; border-top: 1px solid #888; border-bottom: 1px solid #888; background: linear-gradient(#e6e6e6 40%, #888 40%, #888 60%, #e6e6e6 60%); }

/* instruments bar */
.instbar { width: 25px; flex: none; display: flex; flex-direction: column; align-items: center; padding: 11.200px 0 0 6px; background: linear-gradient(90deg, #e1e1e1 3px, #9a9a9a 3px, #9a9a9a 4px, #e1e1e1 4px); }
.ri { width: 15px; height: 15px; flex: none; margin-bottom: 3.600px; }
.ri-more { width: 0; height: 0; margin: -1px 0 0 0; border: 3px solid transparent; border-left: 4px solid #000; border-right: 0; flex: none; }
.ri-sep { width: 19px; height: 2px; margin: 5px 0 3px; background: #fff; border-bottom: 1px solid #eee; flex: none; }
.ri-end { width: 21px; height: 1px; background: #999; margin: 2px 0 0 0; flex: none; }

/* tabs and status */
.tabs { height: 20px; flex: none; display: flex; align-items: flex-start; padding: 1px 0 0 3px; gap: 2px; }
.tab { height: 19px; display: flex; align-items: center; gap: 3px; padding-left: 2px; font-size: 9.300px; background: #e4e4e4; border: 1px solid #8a8a8a; border-top: 1px solid #f4f4f4; border-radius: 0 0 2px 2px; }
.tab-a { width: 54px; height: 17px; }
.tab-b { width: 114px; height: 19px; background: #f0f0f0; border-top: 0; }
.tab-ic { width: 13px; height: 14px; flex: none; }
.tab-nav { margin-left: auto; display: flex; padding: 5px 24px 0 0; }
.tab-nav span { width: 12px; height: 12px; background: #eee; border: 1px solid #bbb; color: #00007a; font-size: 7px; line-height: 10px; text-align: center; overflow: hidden; }

.status { height: 16px; flex: none; display: flex; align-items: flex-end; font-size: 9px; background: #e1e1e1; }
.status-msg { width: 587px; flex: none; padding: 0 0 1px 2px; line-height: 13px; font-size: 8.800px; }
.pane { height: 14px; flex: none; border: 1px solid #cfcfcf; border-bottom-color: #f0f0f0; line-height: 13px; padding-left: 2px; }
.pane-a { width: 131px; margin-right: 2px; }
.pane-b { width: 153px; margin-right: 2px; }
.pane-c { width: 153px; margin-right: 2px; }
.pane-d { width: 50px; background: repeating-linear-gradient(90deg, #8f8f8f 0, #8f8f8f 1px, #d8d8d8 1px, #d8d8d8 6px, #f0f0f0 6px, #f0f0f0 7px); }

/* taskbar */
.taskbar { height: 24px; flex: none; display: flex; color: #eee; background: linear-gradient(#444, #2f2f2f 40%, #111); }
.start { width: 85px; flex: none; display: flex; align-items: center; gap: 3px; padding-left: 9px; background: linear-gradient(#e8823e, #cb5b1e 45%, #a63c10); border-radius: 0 10px 10px 0; color: #fff; font-size: 15px; font-style: italic; font-weight: bold; }
.flag { width: 16px; height: 16px; flex: none; }
.quick { width: 235px; flex: none; display: flex; align-items: center; gap: 3.600px; padding-left: 8px; }
.q { width: 15.800px; height: 15.800px; flex: none; }
.tasks { display: flex; gap: 2px; flex: none; padding-top: 1px; }
.task { width: 74px; height: 22px; flex: none; display: flex; align-items: center; gap: 3px; padding-left: 5px; border-radius: 2px; background: linear-gradient(#4c4c4c, #2c2c2c); border: 1px solid #3a3a3a; font-size: 10px; letter-spacing: .4px; white-space: nowrap; overflow: hidden; }
.active { width: 76px; background: linear-gradient(#1a1a1a, #2a2a2a); border-color: #555; }
.tray { margin-left: 6px; flex: 1; display: flex; align-items: center; background: #101010; border-left: 1px solid #555; }
.tray .q { width: 15px; height: 15px; }
.chev { width: 13px; height: 13px; margin: 0 1px 0 1px; flex: none; border-radius: 50%; background: #555; color: #ccc; font-size: 9px; line-height: 12px; text-align: center; font-weight: bold; overflow: hidden; }
.clock { margin-left: 4px; font-size: 10px; letter-spacing: .2px; white-space: nowrap; }

/* schematic */
.lcdbox rect { fill: #000; stroke: #a8a8a8; stroke-width: 3; }
.comp rect { fill: none; stroke: #000; stroke-width: 1; shape-rendering: crispEdges; }
.t-lbl text { font: 11.500px "Liberation Sans", sans-serif; fill: #111; }
.t-name text { font: bold 14px "Liberation Mono", monospace; fill: #111; }
.t-name .t-tight { font-size: 13px; }
.t-pin text { font: 9px "Liberation Sans", sans-serif; text-anchor: end; fill: #222; }
.t-tiny text { font: 8px "Liberation Sans", sans-serif; fill: #111; }
.t-mark text { font: 13.500px "Liberation Sans", sans-serif; fill: #222; }
.w-black, .w-gray, .w-red, .w-pink { fill: none; stroke-width: 1; shape-rendering: crispEdges; }
.w-black { stroke: #000; }
.w-gray { stroke: #808080; }
.w-red { stroke: #f00; }
.w-pink { stroke: #ff8080; }
.inst { fill: #c0dcc0; stroke: #000; shape-rendering: crispEdges; }
.inst-in { fill: #bbb; stroke: #fff; shape-rendering: crispEdges; }
.ipin circle { r: 2.700px; fill: #808080; stroke: #000; stroke-width: .7; }
.ipin-big circle { fill: #9a9a9a; stroke: #333; }

/* tiny symbol texts */
.ttl-a { font: bold 5px "Liberation Sans", sans-serif; fill: #1a1ac8; }
.misc { font: bold 6.500px "Liberation Sans", sans-serif; fill: #222; }
.b3d { font: bold 8px "Liberation Sans", sans-serif; fill: #222; }
.rt { font: bold 6px "Liberation Mono", monospace; fill: #0f0; }
.ag { font: bold 7px "Liberation Sans", sans-serif; fill: #12a; }
.ldv { font: bold 6.500px "Liberation Sans", sans-serif; fill: #222; }
.ps { font: bold 9px "Liberation Sans", sans-serif; fill: #9cd0ff; }
.w { font: bold 8px "Liberation Sans", sans-serif; fill: #fff; }
.cc { font: bold 5px "Liberation Sans", sans-serif; fill: #7f7; }
```
